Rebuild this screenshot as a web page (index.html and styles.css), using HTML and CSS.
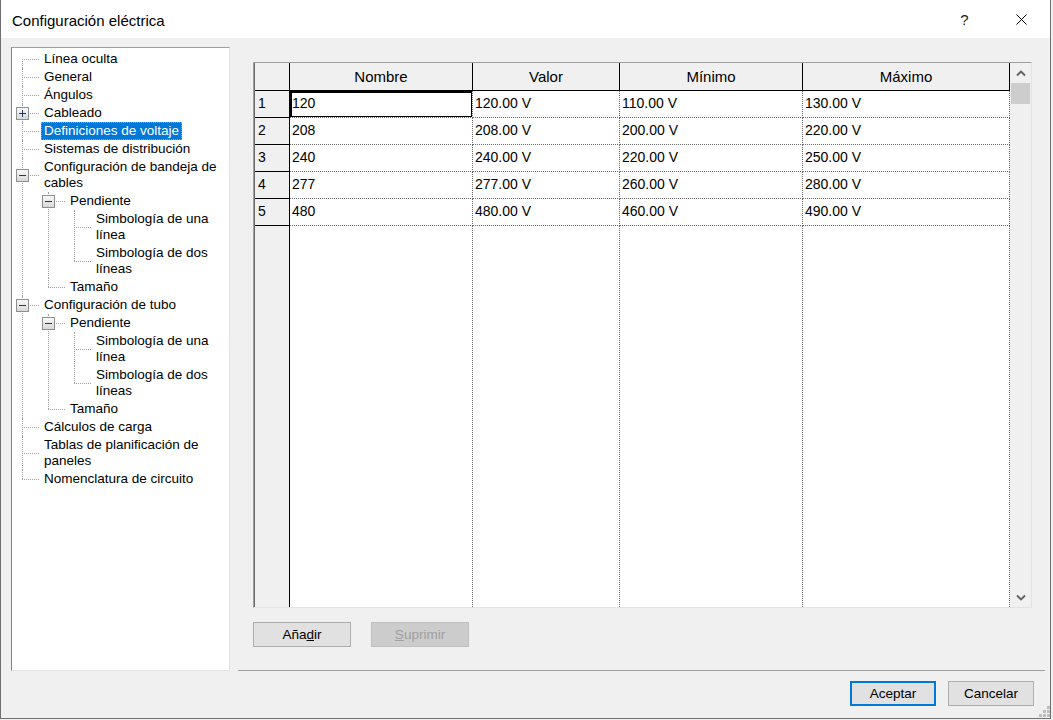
FILE: index.html
```html
<!DOCTYPE html>
<html lang="es">
<head>
<meta charset="utf-8">
<title>Configuración eléctrica</title>
<link rel="stylesheet" href="styles.css">
</head>
<body>
<div class="window">
  <div class="titlebar">
    <span class="title">Configuración eléctrica</span>
    <span class="tb-btn help">?</span>
    <span class="tb-btn close"><svg width="11" height="11" viewBox="0 0 11 11"><path d="M0.5 0.5L10.5 10.5M10.5 0.5L0.5 10.5" stroke="#000" stroke-width="1" fill="none"/></svg></span>
  </div>
  <div class="main">
    <div class="tree-panel">
      <ul class="tree">
        <li><div class="row"><span class="txt">Línea oculta</span></div></li>
        <li><div class="row"><span class="txt">General</span></div></li>
        <li><div class="row"><span class="txt">Ángulos</span></div></li>
        <li><div class="row"><span class="box plus"></span><span class="txt">Cableado</span></div></li>
        <li><div class="row"><span class="txt sel">Definiciones de voltaje</span></div></li>
        <li><div class="row"><span class="txt">Sistemas de distribución</span></div></li>
        <li><div class="row"><span class="box minus"></span><span class="txt">Configuración de bandeja de cables</span></div>
          <ul>
            <li><div class="row"><span class="box minus"></span><span class="txt">Pendiente</span></div>
              <ul>
                <li><div class="row"><span class="txt">Simbología de una línea</span></div></li>
                <li><div class="row"><span class="txt">Simbología de dos líneas</span></div></li>
              </ul>
            </li>
            <li><div class="row"><span class="txt">Tamaño</span></div></li>
          </ul>
        </li>
        <li><div class="row"><span class="box minus"></span><span class="txt">Configuración de tubo</span></div>
          <ul>
            <li><div class="row"><span class="box minus"></span><span class="txt">Pendiente</span></div>
              <ul>
                <li><div class="row"><span class="txt">Simbología de una línea</span></div></li>
                <li><div class="row"><span class="txt">Simbología de dos líneas</span></div></li>
              </ul>
            </li>
            <li><div class="row"><span class="txt">Tamaño</span></div></li>
          </ul>
        </li>
        <li><div class="row"><span class="txt">Cálculos de carga</span></div></li>
        <li><div class="row"><span class="txt">Tablas de planificación de paneles</span></div></li>
        <li><div class="row"><span class="txt">Nomenclatura de circuito</span></div></li>
      </ul>
    </div>
    <div class="right">
      <div class="grid">
        <div class="table">
          <div class="trow head">
            <div class="cell rh"></div>
            <div class="cell">Nombre</div>
            <div class="cell">Valor</div>
            <div class="cell">Mínimo</div>
            <div class="cell">Máximo</div>
          </div>
          <div class="trow">
            <div class="cell rh">1</div>
            <div class="cell cur">120</div>
            <div class="cell">120.00 V</div>
            <div class="cell">110.00 V</div>
            <div class="cell">130.00 V</div>
          </div>
          <div class="trow">
            <div class="cell rh">2</div>
            <div class="cell">208</div>
            <div class="cell">208.00 V</div>
            <div class="cell">200.00 V</div>
            <div class="cell">220.00 V</div>
          </div>
          <div class="trow">
            <div class="cell rh">3</div>
            <div class="cell">240</div>
            <div class="cell">240.00 V</div>
            <div class="cell">220.00 V</div>
            <div class="cell">250.00 V</div>
          </div>
          <div class="trow">
            <div class="cell rh">4</div>
            <div class="cell">277</div>
            <div class="cell">277.00 V</div>
            <div class="cell">260.00 V</div>
            <div class="cell">280.00 V</div>
          </div>
          <div class="trow">
            <div class="cell rh">5</div>
            <div class="cell">480</div>
            <div class="cell">480.00 V</div>
            <div class="cell">460.00 V</div>
            <div class="cell">490.00 V</div>
          </div>
          <div class="trow fill">
            <div class="cell rh"></div>
            <div class="cell"></div>
            <div class="cell"></div>
            <div class="cell"></div>
            <div class="cell"></div>
          </div>
        </div>
        <div class="vscroll">
          <div class="arrow"><svg width="10" height="7" viewBox="0 0 10 7"><path d="M1 5.5L5 1.5L9 5.5" fill="none" stroke="#606060" stroke-width="1.8"/></svg></div>
          <div class="thumb"></div>
          <div class="track"></div>
          <div class="arrow"><svg width="10" height="7" viewBox="0 0 10 7"><path d="M1 1.5L5 5.5L9 1.5" fill="none" stroke="#606060" stroke-width="1.8"/></svg></div>
        </div>
      </div>
      <div class="grid-buttons">
        <button class="btn">Aña<u>d</u>ir</button>
        <button class="btn" disabled><u>S</u>uprimir</button>
      </div>
    </div>
  </div>
  <div class="footer">
    <button class="btn primary">Aceptar</button>
    <button class="btn">Cancelar</button>
  </div>
  <svg class="grip" width="11" height="11" viewBox="0 0 11 11">
    <rect x="8" y="0" width="3" height="3"/>
    <rect x="4" y="4" width="3" height="3"/>
    <rect x="8" y="4" width="3" height="3"/>
    <rect x="0" y="8" width="3" height="3"/>
    <rect x="4" y="8" width="3" height="3"/>
    <rect x="8" y="8" width="3" height="3"/>
  </svg>
</div>
</body>
</html>
```

FILE: styles.css
```css
html, body {
  margin: 0;
  padding: 0;
  background: #f0f0f0;
}

body {
  font-family: "Liberation Sans", Arial, sans-serif;
  font-size: 13.5px;
  color: #000;
}

.window {
  position: relative;
  width: 1051px;
  height: 719px;
  box-sizing: border-box;
  border: 1px solid #707070;
  border-top: none;
  background: #f0f0f0;
  display: flex;
  flex-direction: column;
}

/* Title bar */
.titlebar {
  height: 38px;
  flex: none;
  background: #fff;
  display: flex;
  align-items: center;
}

.title {
  padding-left: 11px;
  font-size: 15px;
  padding-top: 2px;
}

.tb-btn {
  width: 57px;
  height: 38px;
  display: flex;
  align-items: center;
  justify-content: center;
  padding-top: 1px;
  box-sizing: border-box;
}

.help {
  margin-left: auto;
  font-size: 15px;
  color: #1a1a1a;
}

/* Main area */
.main {
  display: flex;
  gap: 8px;
  padding: 9px 5px 0 10px;
}

.tree-panel {
  width: 219px;
  height: 624px;
  box-sizing: border-box;
  background: #fff;
  border: 1px solid;
  border-color: #a0a0a0 #e3e3e3 #e3e3e3 #828282;
  padding-top: 2px;
  overflow: hidden;
}

.tree, .tree ul {
  list-style: none;
  margin: 0;
  padding: 0;
}

.tree {
  padding-left: 29px;
}

.tree ul {
  padding-left: 26px;
}

.tree li {
  position: relative;
}

.tree li:not(:last-child)::before {
  content: "";
  position: absolute;
  left: -19px;
  top: 0;
  bottom: 0;
  border-left: 1px dotted #a0a0a0;
}

.tree > li:first-child::before {
  top: 9px;
}

.row {
  position: relative;
  display: flex;
  align-items: flex-start;
}

.row::before {
  content: "";
  position: absolute;
  left: -19px;
  top: 50%;
  width: 17px;
  border-top: 1px dotted #a0a0a0;
}

.tree li:last-child > .row::after {
  content: "";
  position: absolute;
  left: -19px;
  top: 0;
  height: 50%;
  border-left: 1px dotted #a0a0a0;
}

.txt {
  padding: 1px 3px;
  line-height: 16px;
}

.txt.sel {
  background: #0078d7;
  color: #fff;
  outline: 1px dotted #ff8728;
  outline-offset: -1px;
}

.box {
  position: absolute;
  z-index: 1;
  left: -25px;
  top: calc(50% - 6px);
  width: 13px;
  height: 13px;
  box-sizing: border-box;
  border: 1px solid #8e8f8f;
  background: linear-gradient(#f8f8f8, #d8d8d8);
}

.box::after {
  content: "";
  position: absolute;
  left: 2px;
  top: 5px;
  width: 7px;
  height: 1px;
  background: #1c3a66;
}

.box.plus::before {
  content: "";
  position: absolute;
  left: 5px;
  top: 2px;
  width: 1px;
  height: 7px;
  background: #1c3a66;
}

/* Right panel */
.right {
  width: 807px;
  height: 624px;
  box-sizing: border-box;
  border-bottom: 1px solid #a0a0a0;
  padding: 15px 13px 0 15px;
}

.grid {
  display: flex;
  height: 546px;
  box-sizing: border-box;
  border: 1px solid;
  border-color: #a0a0a0 #e3e3e3 #e3e3e3 #a0a0a0;
}

.table {
  flex: 1;
  display: flex;
  flex-direction: column;
  border-left: 1px solid #696969;
  background: #fff;
  font-size: 14px;
}

.trow {
  display: grid;
  grid-template-columns: 35px 183px 147px 183px 207px;
}

.cell {
  box-sizing: border-box;
  height: 27px;
  display: flex;
  align-items: center;
  padding: 0 0 3px 2px;
  white-space: nowrap;
  border-right: 1px dotted #6a6a6a;
  border-bottom: 1px dotted #6a6a6a;
}

.cell.rh {
  background: #f0f0f0;
  border-right: 1px solid #000;
  border-bottom: 1px solid #000;
  padding-left: 3px;
}

.head .cell {
  height: 28px;
  padding: 0 0 1px 0;
  font-size: 15px;
  justify-content: center;
  background: #f0f0f0;
  border-right: 1px solid #000;
  border-bottom: 1px solid #000;
}

.cell.cur {
  box-shadow: inset 2px 2px 0 #000, inset -1px -1px 0 #000;
}

.fill {
  flex: 1;
}

.fill .cell,
.fill .cell.rh {
  height: auto;
  border-bottom: none;
}

/* Scrollbar */
.vscroll {
  width: 21px;
  flex: none;
  background: #f0f0f0;
  display: flex;
  flex-direction: column;
}

.arrow {
  height: 20px;
  display: flex;
  align-items: center;
  justify-content: center;
}

.arrow svg {
  display: block;
}

.thumb {
  margin-left: 1px;
  width: 19px;
  height: 21px;
  background: #cdcdcd;
}

.track {
  flex: 1;
}

/* Buttons */
.btn {
  height: 25px;
  box-sizing: border-box;
  padding: 0;
  border: 1px solid #adadad;
  background: #e1e1e1;
  font-family: "Liberation Sans", Arial, sans-serif;
  font-size: 13.5px;
  color: #000;
}

.btn:disabled {
  background: #cccccc;
  border-color: #bfbfbf;
  color: #a0a0a0;
}

.btn.primary {
  border: 2px solid #0078d7;
}

.grid-buttons {
  display: flex;
  gap: 20px;
  margin-top: 14px;
}

.grid-buttons .btn {
  width: 98px;
}

.footer {
  display: flex;
  justify-content: flex-end;
  gap: 12px;
  padding: 10px 16px 0 0;
}

.footer .btn {
  width: 86px;
}

.grip {
  position: absolute;
  right: 0;
  bottom: 1px;
  fill: #bdbdbd;
}
```
